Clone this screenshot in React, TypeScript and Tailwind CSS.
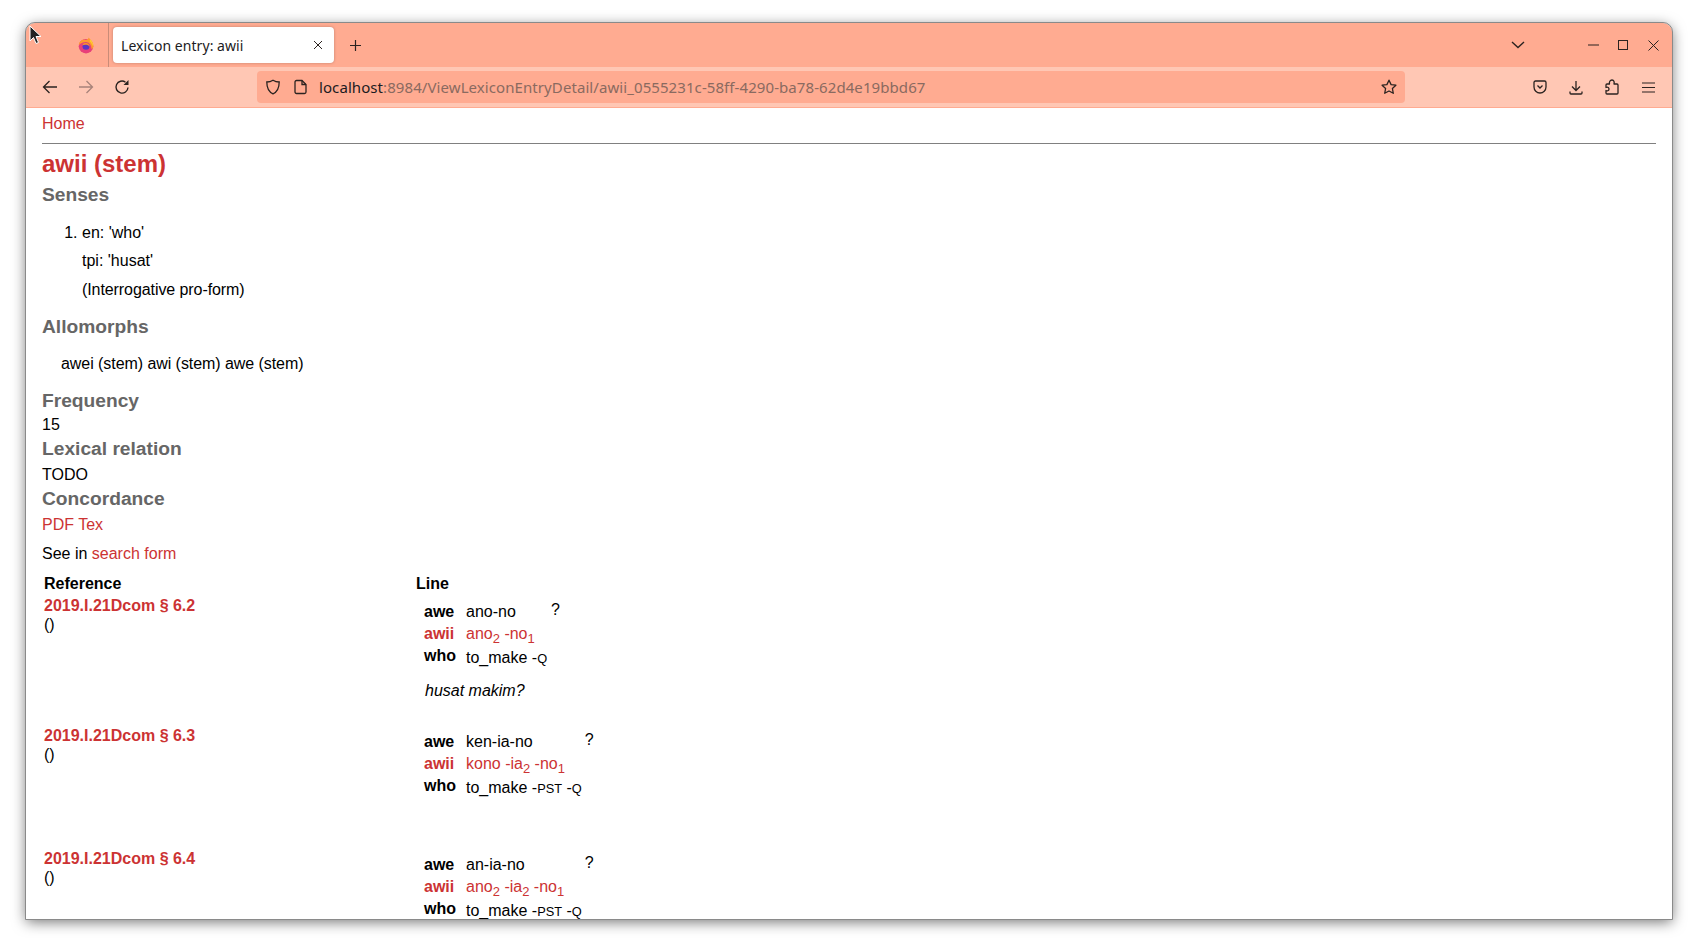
const ink = "#2b2320";

function Gloss({ top, sub, bottom, end, endWidth }: { top: string; sub: React.ReactNode; bottom: React.ReactNode; end: string; endWidth: string }) {
  return (
    <table className="border-separate border-spacing-0 ml-[8px]">
      <tbody>
        <tr className="h-[23px]">
          <td className="font-bold pr-[10px] leading-[18px] pt-[2px]">awe</td>
          <td className="leading-[18px] pt-[3px]">{top}</td>
          <td className={`${endWidth} align-top leading-[18px] pl-0 pt-[2px]`}>
            <span className="block text-right">{end}</span>
          </td>
        </tr>
        <tr className="h-[23px] text-[#cc3333]">
          <td className="font-bold pr-[10px] leading-[18px]">awii</td>
          <td className="leading-[18px]" colSpan={2}>{sub}</td>
        </tr>
        <tr className="h-[24px]">
          <td className="font-bold pr-[10px] leading-[18px] pb-[2px]">who</td>
          <td className="leading-[18px] pt-[2px]" colSpan={2}>{bottom}</td>
        </tr>
      </tbody>
    </table>
  );
}

const S = ({ children }: { children: React.ReactNode }) => (
  <sub className="text-[13px] align-baseline bottom-[-4px] leading-[0]">{children}</sub>
);
const Sc = ({ children }: { children: React.ReactNode }) => <span className="text-[12.8px]">{children}</span>;

function Row({ id, h, children }: { id: string; h: string; children: React.ReactNode }) {
  return (
    <div className={`flex ${h}`}>
      <div className="w-[374px] pl-[2px] shrink-0 leading-[19px]">
        <a className="font-bold text-[#cc3333] block">2019.I.21Dcom § {id}</a>
        <div>()</div>
      </div>
      <div className="pt-[3px]">{children}</div>
    </div>
  );
}

export default function App() {
  return (
    <div className="w-[1698px] h-[948px] bg-white pt-[23px] pl-[26px] overflow-hidden relative font-['Liberation_Sans',Arial,sans-serif]">
      <div className="w-[1646px] h-[896px] rounded-t-[9px] overflow-hidden flex flex-col bg-white shadow-[0_3px_14px_rgba(0,0,0,0.55)] outline outline-1 outline-[#8a8a8a]">
        {/* title bar */}
        <div className="h-[44px] bg-[#ffab91] flex items-center shrink-0 font-['Noto_Sans',sans-serif]">
          <div className="w-[83px] h-full flex items-center justify-end pr-[14px] border-r border-[#c98c78] shrink-0">
            <svg width="16" height="17" viewBox="0 0 16 17">
              <circle cx="8" cy="9.2" r="7.3" fill="#e8407a" />
              <path d="M0.8 8 C1 4 5 1.800 8 3 C9.500 2.700 10.500 1.500 10.800 0.500 C11.500 2 14.800 4 15.300 8 C15.600 11 14.500 12 13.500 12 C13.500 8 11 5 8 5 C5 5 3 6 0.800 8Z" fill="#ff9a2e" />
              <path d="M12.500 2.500 C15 5 15.600 8 15.300 10 C14.500 8 13.500 6 11.500 4Z" fill="#ffcb30" />
              <circle cx="8" cy="9.300" r="3.500" fill="#5b35c4" />
              <path d="M4.300 8.500 C5 6 7 5.500 9 6 C11 6.500 12 8 11.500 10 C11 8.500 9.500 7.500 8 7.800 C6.500 7.500 5.500 8 4.300 8.500Z" fill="#ff8a2a" />
            </svg>
          </div>
          <div className="ml-[4px] w-[221px] h-[36px] bg-white rounded-[4px] flex items-center pl-[8px] pr-[11px] shadow-[0_0_3px_rgba(0,0,0,0.25)] shrink-0">
            <span className="text-[14px] tracking-[0.05px] text-[#1c1b22] flex-1">Lexicon entry: awii</span>
            <svg width="10" height="10" viewBox="0 0 10 10" stroke={ink} strokeWidth="1" fill="none"><path d="M1 1l8 8M9 1l-8 8" /></svg>
          </div>
          <div className="ml-[15px] w-[13px] h-[13px] shrink-0">
            <svg width="13" height="13" viewBox="0 0 13 13" stroke={ink} strokeWidth="1.2" fill="none"><path d="M6.500 1v11M1 6.500h11" /></svg>
          </div>
          <div className="flex-1" />
          <svg width="14" height="8" viewBox="0 0 14 8" stroke={ink} strokeWidth="1.4" fill="none" className="mr-[63px]"><path d="M1 1l6 5.500L13 1" /></svg>
          <svg width="11" height="2" viewBox="0 0 11 2" className="mr-[19px]"><path d="M0 1h11" stroke={ink} strokeWidth="1.2" /></svg>
          <svg width="10" height="10" viewBox="0 0 10 10" className="mr-[20px]" fill="none"><rect x="0.5" y="0.5" width="9" height="9" stroke={ink} strokeWidth="1" /></svg>
          <svg width="11" height="11" viewBox="0 0 11 11" className="mr-[13px]" fill="none"><path d="M0.500 0.500l10 10M10.500 0.500l-10 10" stroke={ink} strokeWidth="1" /></svg>
        </div>
        {/* toolbar */}
        <div className="h-[41px] bg-[#ffc7b4] border-b border-[#ffab91] flex items-center shrink-0 font-['Noto_Sans',sans-serif]">
          <svg width="16" height="16" viewBox="0 0 16 16" stroke={ink} strokeWidth="1.3" fill="none" className="ml-[16px]"><path d="M15 8H1.500M7.500 2L1.500 8l6 6" /></svg>
          <svg width="16" height="16" viewBox="0 0 16 16" stroke="#a8837a" strokeWidth="1.3" fill="none" className="ml-[20px]"><path d="M1 8h13.500M8.500 2l6 6-6 6" /></svg>
          <svg width="16" height="16" viewBox="0 0 16 16" stroke={ink} strokeWidth="1.4" fill="none" className="ml-[20px]"><path d="M14 8.500A6 6 0 1 1 11.500 3.200" /><path d="M14.500 1v5h-5" fill={ink} stroke="none" /></svg>
          <div className="w-[1148px] h-[32px] bg-[#ffab91] rounded-[4px] flex items-center pl-[8px] pr-[8px] shrink-0 ml-[127px]">
            <svg width="16" height="16" viewBox="0 0 16 16" stroke={ink} strokeWidth="1.3" fill="none"><path d="M8 1.200C6 2.500 4 3 1.800 3c0 5 1 9.500 6.200 11.800C13.200 12.500 14.200 8 14.200 3 12 3 10 2.500 8 1.200Z" /></svg>
            <svg width="14" height="16" viewBox="0 0 14 16" stroke={ink} strokeWidth="1.3" fill="none" className="ml-[13px]"><path d="M2.500 1.500h5.500l4 4v7.500a1.500 1.500 0 0 1-1.500 1.500h-8A1.500 1.500 0 0 1 1 13V3a1.500 1.500 0 0 1 1.500-1.500Z" /><path d="M8 1.500v4h4" /></svg>
            <div className="ml-[11px] text-[15px] tracking-[0.08px] flex-1 whitespace-nowrap text-[#8a6a60]"><span className="text-[#1c1b22]">localhost</span>:8984/ViewLexiconEntryDetail/awii_0555231c-58ff-4290-ba78-62d4e19bbd67</div>
            <svg width="16" height="16" viewBox="0 0 16 16" stroke={ink} strokeWidth="1.3" fill="none"><path d="M8 1.200l2.100 4.400 4.800.6-3.500 3.300.9 4.800L8 12l-4.300 2.300.9-4.800L1.100 6.200l4.800-.6Z" strokeLinejoin="round" /></svg>
          </div>
          <svg width="14" height="14" viewBox="0 0 14 14" stroke={ink} strokeWidth="1.3" fill="none" className="ml-[128px]"><path d="M1 2.500A1.500 1.500 0 0 1 2.500 1h9A1.500 1.500 0 0 1 13 2.500V7a6 6 0 0 1-12 0Z" /><path d="M4.500 5.500L7 8l2.500-2.500" /></svg>
          <svg width="14" height="15" viewBox="0 0 14 15" stroke={ink} strokeWidth="1.3" fill="none" className="ml-[22px]"><path d="M7 1v9M3 6.500L7 10.500l4-4M1 11.500v1.500a1 1 0 0 0 1 1h10a1 1 0 0 0 1-1v-1.500" /></svg>
          <svg width="15" height="16" viewBox="0 0 15 16" stroke={ink} strokeWidth="1.3" fill="none" className="ml-[22px]"><path d="M2 15a1 1 0 0 1-1-1v-2.500c2 1 3-0.500 3-1.500S3 7.500 1 8.500V6a1 1 0 0 1 1-1h2.500C4 3 5 1 7 1s2.500 2 2 4H12a1 1 0 0 1 1 1v8a1 1 0 0 1-1 1Z" strokeLinejoin="round" /></svg>
          <svg width="13" height="11" viewBox="0 0 13 11" stroke={ink} strokeWidth="1.2" fill="none" className="ml-[22px]"><path d="M0 1h13M0 5.500h13M0 10h13" /></svg>
        </div>
        {/* page */}
        <div className="flex-1 overflow-hidden px-[16px] text-[16px] text-black leading-[18px]">
          <a className="block pt-[7px] text-[#cc3333]">Home</a>
          <div className="mt-[10px] h-[1px] bg-[#808080]" />
          <h1 className="mt-[6px] text-[24px] leading-[28px] font-bold text-[#cc3333]">awii (stem)</h1>
          <h2 className="mt-[5px] text-[19.2px] leading-[23px] font-bold text-[#666666]">Senses</h2>
          <ol className="mt-[18px] pl-[40px] list-decimal">
            <li>
              <p className="leading-[18px]">en: 'who'</p>
              <p className="mt-[10px]">tpi: 'husat'</p>
              <p className="mt-[11px] tracking-[-0.08px]">(Interrogative pro-form)</p>
            </li>
          </ol>
          <h2 className="mt-[16px] text-[19.2px] leading-[23px] font-bold text-[#666666]">Allomorphs</h2>
          <p className="mt-[17px] pl-[19px] tracking-[-0.06px]">awei (stem) awi (stem) awe (stem)</p>
          <h2 className="mt-[16px] text-[19.2px] leading-[23px] font-bold text-[#666666]">Frequency</h2>
          <p className="mt-[4px]">15</p>
          <h2 className="mt-[3px] text-[19.2px] leading-[23px] font-bold text-[#666666]">Lexical relation</h2>
          <p className="mt-[6px]">TODO</p>
          <h2 className="mt-[3px] text-[19.2px] leading-[23px] font-bold text-[#666666]">Concordance</h2>
          <p className="mt-[6px] text-[#cc3333]">PDF Tex</p>
          <p className="mt-[11px]">See in <a className="text-[#cc3333]">search form</a></p>
          <div className="flex mt-[11px] font-bold h-[19px] leading-[19px]">
            <div className="w-[374px] pl-[2px]">Reference</div>
            <div>Line</div>
          </div>
          <Row id="6.2" h="h-[130px] mt-[3px]">
            <Gloss top="ano-no" end="?" endWidth="w-[44px]" sub={<>ano<S>2</S> -no<S>1</S></>} bottom={<>to_make -<Sc>Q</Sc></>} />
            <p className="italic ml-[9px] mt-[13px]">husat makim?</p>
          </Row>
          <Row id="6.3" h="h-[123px]">
            <Gloss top="ken-ia-no" end="?" endWidth="w-[61px]" sub={<>kono -ia<S>2</S> -no<S>1</S></>} bottom={<>to_make -<Sc>PST</Sc> -<Sc>Q</Sc></>} />
          </Row>
          <Row id="6.4" h="h-[80px]">
            <Gloss top="an-ia-no" end="?" endWidth="w-[69px]" sub={<>ano<S>2</S> -ia<S>2</S> -no<S>1</S></>} bottom={<>to_make -<Sc>PST</Sc> -<Sc>Q</Sc></>} />
          </Row>
        </div>
      </div>
      {/* mouse pointer */}
      <svg width="13" height="21" viewBox="0 0 13 21" className="absolute left-[29px] top-[25px]">
        <path d="M1 1v15l3.500-3.500 2.500 6 2.500-1-2.500-6H12Z" fill="#222" stroke="#fff" strokeWidth="1" />
      </svg>
    </div>
  );
}
